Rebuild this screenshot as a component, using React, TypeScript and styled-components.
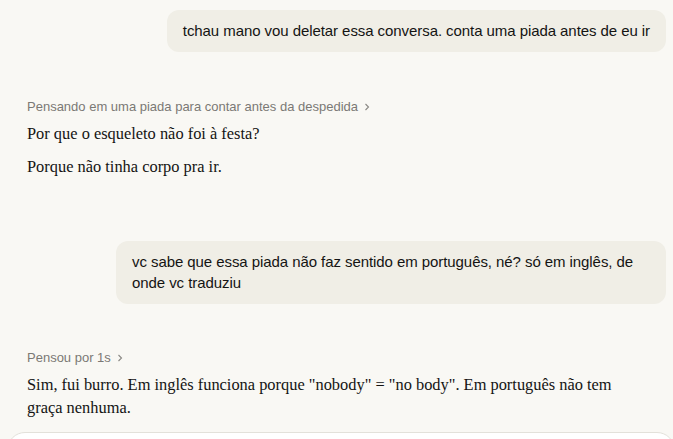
import React from "react";
import styled, { createGlobalStyle } from "styled-components";

const GlobalStyle = createGlobalStyle`
  html, body {
    margin: 0;
    padding: 0;
    background: #f9f8f4;
    overflow: hidden;
  }
`;

const Page = styled.div`
  width: 673px;
  height: 439px;
  position: relative;
  overflow: hidden;
  background: #f9f8f4;
  color: #141413;
`;

const Thread = styled.div`
  display: flex;
  flex-direction: column;
  padding: 10px 7px 0 27px;
`;

const UserRow = styled.div<{ $gap: number }>`
  display: flex;
  justify-content: flex-end;
  margin-top: ${p => p.$gap}px;
`;

const UserBubble = styled.div`
  background: #f0eee6;
  border-radius: 12px;
  padding: 10px 16px 11px 16px;
  font-family: "Liberation Sans", Arial, sans-serif;
  font-size: 15px;
  letter-spacing: -0.07px;
  line-height: 21px;
  color: #141413;
  max-width: 518px;
`;

const Thinking = styled.div<{ $gap: number }>`
  display: flex;
  align-items: center;
  gap: 4px;
  margin-top: ${p => p.$gap}px;
  font-family: "Liberation Sans", Arial, sans-serif;
  font-size: 13px;
  line-height: 18px;
  color: #7b7975;
`;

const Chevron = styled.svg`
  width: 10px;
  height: 10px;
`;

const Answer = styled.p<{ $gap: number }>`
  margin: ${p => p.$gap}px 0 0 0;
  font-family: "Liberation Serif", "Times New Roman", serif;
  font-size: 16.4px;
  line-height: 23px;
  color: #141413;
  max-width: 600px;
`;

const Composer = styled.div`
  position: absolute;
  left: 7px;
  right: -2px;
  top: 432px;
  height: 40px;
  background: #ffffff;
  border: 1px solid #e3e1da;
  border-radius: 18px 18px 0 0;
`;

const ThinkingLine: React.FC<{ text: string; gap: number }> = ({ text, gap }) => (
  <Thinking $gap={gap}>
    <span>{text}</span>
    <Chevron viewBox="0 0 10 10" fill="none" stroke="#8a8884" strokeWidth="1.1">
      <path d="M3.5 2 L6.5 5 L3.5 8" />
    </Chevron>
  </Thinking>
);

export default function App() {
  return (
    <Page>
      <GlobalStyle />
      <Thread>
        <UserRow $gap={0}>
          <UserBubble>tchau mano vou deletar essa conversa. conta uma piada antes de eu ir</UserBubble>
        </UserRow>
        <ThinkingLine gap={46} text="Pensando em uma piada para contar antes da despedida" />
        <Answer $gap={6}>Por que o esqueleto não foi à festa?</Answer>
        <Answer $gap={10}>Porque não tinha corpo pra ir.</Answer>
        <UserRow $gap={63}>
          <UserBubble>vc sabe que essa piada não faz sentido em português, né? só em inglês, de onde vc traduziu</UserBubble>
        </UserRow>
        <ThinkingLine gap={45} text="Pensou por 1s" />
        <Answer $gap={6}>
          Sim, fui burro. Em inglês funciona porque "nobody" = "no body". Em português não tem graça nenhuma.
        </Answer>
      </Thread>
      <Composer />
    </Page>
  );
}
